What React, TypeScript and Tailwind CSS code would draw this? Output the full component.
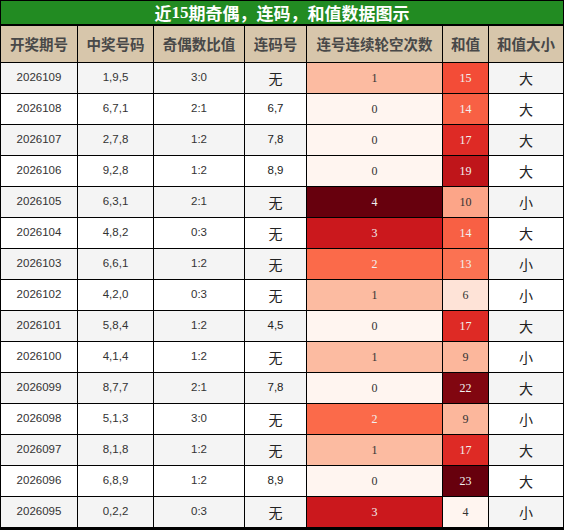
const rows: [string, string, string, string, number, number, string][] = [
  ["2026109", "1,9,5", "3:0", "无", 1, 15, "大"],
  ["2026108", "6,7,1", "2:1", "6,7", 0, 14, "大"],
  ["2026107", "2,7,8", "1:2", "7,8", 0, 17, "大"],
  ["2026106", "9,2,8", "1:2", "8,9", 0, 19, "大"],
  ["2026105", "6,3,1", "2:1", "无", 4, 10, "小"],
  ["2026104", "4,8,2", "0:3", "无", 3, 14, "大"],
  ["2026103", "6,6,1", "1:2", "无", 2, 13, "小"],
  ["2026102", "4,2,0", "0:3", "无", 1, 6, "小"],
  ["2026101", "5,8,4", "1:2", "4,5", 0, 17, "大"],
  ["2026100", "4,1,4", "1:2", "无", 1, 9, "小"],
  ["2026099", "8,7,7", "2:1", "7,8", 0, 22, "大"],
  ["2026098", "5,1,3", "3:0", "无", 2, 9, "小"],
  ["2026097", "8,1,8", "1:2", "无", 1, 17, "大"],
  ["2026096", "6,8,9", "1:2", "8,9", 0, 23, "大"],
  ["2026095", "0,2,2", "0:3", "无", 3, 4, "小"],
];

// Reds colormap, 0..4
const gapColor: Record<number, string> = {
  0: "bg-[#fff5f0] text-[#333]",
  1: "bg-[#fcbba1] text-[#333]",
  2: "bg-[#fb6a4a] text-[#f1f1f1]",
  3: "bg-[#cb181d] text-[#f1f1f1]",
  4: "bg-[#67000d] text-[#f1f1f1]",
};

// Reds colormap, 4..23
const sumColor: Record<number, string> = {
  4: "bg-[#fff5f0] text-[#333]",
  6: "bg-[#fee3d7] text-[#333]",
  9: "bg-[#fcb79c] text-[#333]",
  10: "bg-[#fca588] text-[#333]",
  13: "bg-[#fb7252] text-[#f1f1f1]",
  14: "bg-[#f86044] text-[#f1f1f1]",
  15: "bg-[#f34c37] text-[#f1f1f1]",
  17: "bg-[#de2a25] text-[#f1f1f1]",
  19: "bg-[#bf151a] text-[#f1f1f1]",
  22: "bg-[#810610] text-[#f1f1f1]",
  23: "bg-[#67000d] text-[#f1f1f1]",
};

const headers = ["开奖期号", "中奖号码", "奇偶数比值", "连码号", "连号连续轮空次数", "和值", "和值大小"];

const sans = "font-['Liberation_Sans','Noto_Sans_CJK_SC',sans-serif]";
const serif = "font-['Liberation_Serif','Noto_Sans_CJK_SC',serif]";
const cjk = "font-['Noto_Sans_CJK_SC',sans-serif]";

export default function App() {
  return (
    <div className="w-[564px] h-[530px] bg-black p-px">
      <div className="grid grid-cols-[76px_75px_90px_61px_135px_45px_74px] gap-px">
        {/* 标题 */}
        <div
          className={`col-span-7 h-[24px] border-b border-black bg-[#228b22] flex items-center justify-center text-white text-[17px] font-bold leading-none ${cjk}`}
        >
          近<span className={serif}>15</span>期奇偶，连码，和值数据图示
        </div>

        {/* 表头 */}
        {headers.map((h) => (
          <div
            key={h}
            className={`h-[36px] bg-[#d7c6ab] flex items-center justify-center text-[#484848] text-[14.5px] font-semibold leading-none ${cjk}`}
          >
            {h}
          </div>
        ))}

        {/* 数据行 */}
        {rows.map((r, i) => {
          const bg = i % 2 === 0 ? "bg-[#f4f4f4]" : "bg-white";
          return [
            <div key={`${i}a`} className={`h-[30px] ${bg} flex items-center justify-center text-[#333] text-[11.5px] ${sans}`}>
              {r[0]}
            </div>,
            <div key={`${i}b`} className={`h-[30px] ${bg} flex items-center justify-center text-[#333] text-[11.5px] ${sans}`}>
              {r[1]}
            </div>,
            <div key={`${i}c`} className={`h-[30px] ${bg} flex items-center justify-center text-[#333] text-[11.5px] ${sans}`}>
              {r[2]}
            </div>,
            <div
              key={`${i}d`}
              className={`h-[30px] ${bg} flex items-center justify-center text-[#222] leading-none ${r[3] === "无" ? `text-[14px] ${cjk}` : `text-[11.5px] ${sans}`}`}
            >
              {r[3]}
            </div>,
            <div key={`${i}e`} className={`h-[30px] ${gapColor[r[4]]} flex items-center justify-center text-[12px] ${serif}`}>
              {r[4]}
            </div>,
            <div key={`${i}f`} className={`h-[30px] ${sumColor[r[5]]} flex items-center justify-center text-[12px] ${serif}`}>
              {r[5]}
            </div>,
            <div key={`${i}g`} className={`h-[30px] ${bg} flex items-center justify-center text-[#222] text-[14px] leading-none ${cjk}`}>
              {r[6]}
            </div>,
          ];
        })}
      </div>
    </div>
  );
}
